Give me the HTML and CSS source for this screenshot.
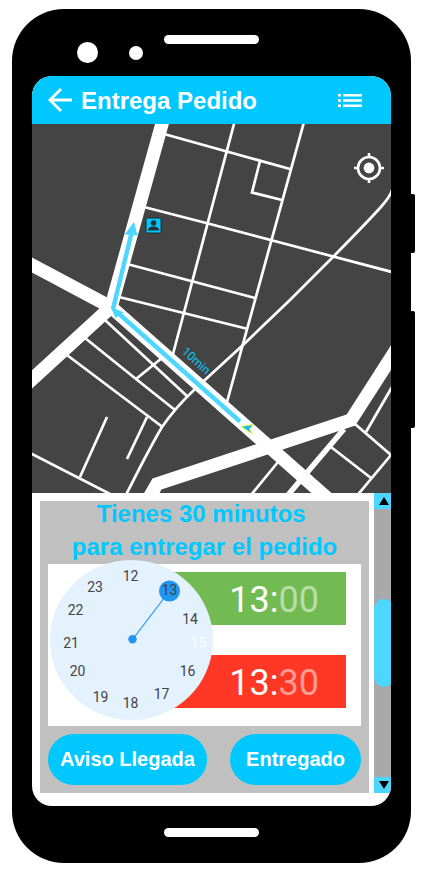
FILE: index.html
```html
<!DOCTYPE html>
<html lang="es">
<head>
<meta charset="utf-8">
<meta name="viewport" content="width=device-width, initial-scale=1">
<title>Entrega Pedido</title>
<link rel="stylesheet" href="styles.css">
</head>
<body>
<div class="phone">
  <span class="side-key side-key-power"></span>
  <span class="side-key side-key-volume"></span>
  <div class="bezel-top">
    <div class="sensors"><span class="camera"></span><span class="sensor"></span></div>
    <span class="speaker"></span>
  </div>
  <main class="screen">
    <header class="app-bar">
      <button class="icon-button" type="button" aria-label="Volver">
        <svg width="24" height="24" viewBox="0 0 24 24" fill="none" stroke="#fff" stroke-width="2.800"><path d="M24 12H3M13 1L2 12L13 23"/></svg>
      </button>
      <h1 class="app-title">Entrega Pedido</h1>
      <button class="icon-button menu-button" type="button" aria-label="Lista">
        <svg width="24" height="24" viewBox="0 0 24 24" fill="#fff"><path d="M0 6h3v2.500H0zM5 6h19v2.500H5zM0 11.200h3v2.500H0zM5 11.200h19v2.500H5zM0 16.500h3v2.500H0zM5 16.500h19v2.500H5z"/></svg>
      </button>
    </header>
    <section class="map" aria-label="Mapa">
      <svg class="map-drawing" viewBox="32 124 359 369">
        <g class="street">
          <path d="M164 134L290 169"/>
          <path d="M144 207L210 224L392 272"/>
          <path d="M129 264.500L255 298"/>
          <path d="M119 297L246 328.500"/>
          <path d="M234.500 122L173 354"/>
          <path d="M304 122L227 402"/>
          <path d="M260 161L252 192.500L282 200"/>
          <path d="M392 190C390 198 384 205 333 257L290 300L243 345L194 390Q175 408 162 427Q149 449 126 495"/>
          <path d="M105 320L188 397"/>
          <path d="M85 338L136 379L175 410"/>
          <path d="M67 355L162.500 427"/>
          <path d="M136 379L162 358"/>
          <path d="M107 417L80 477"/>
          <path d="M147 417L127 459"/>
          <path d="M31 453.500L111 494.500"/>
          <path d="M278 462L251 495"/>
          <path d="M355 424L391 455L358 494.500"/>
          <path d="M331 447L371 478"/>
          <path d="M366 432L392 387"/>
        </g>
        <path class="lane" d="M344 429L288 495"/>
        <g class="road">
          <path d="M165 113L111 307L15 395"/>
          <path d="M15 256L111 307L344 513"/>
          <path d="M142 510L157 484L351 420L403 339"/>
        </g>
        <path class="route" d="M132 231L113 309M117 312L240 421.500"/>
        <path class="route-head" d="M134 222L137.500 235.500L124.500 234.500ZM110.500 306.500L123.500 312.500L115.500 318Z"/>
        <path class="vehicle" d="M241 426.500L253.500 424.500L249.500 429L252.500 434Z"/>
        <g transform="translate(145.500 217.500)">
          <rect class="pin" x=".5" y=".5" width="15" height="15" rx="1.500"/>
          <circle cx="8" cy="5.500" r="2.800" fill="#263238"/>
          <path d="M2.500 13V11.800C3.500 9.500 6 9 8 9S12.500 9.500 13.500 11.800V13Z" fill="#263238"/>
        </g>
        <text class="route-time" transform="translate(181 352.500) rotate(42)">10min</text>
      </svg>
      <button class="icon-button locate-button" type="button" aria-label="Mi ubicación">
        <svg width="30" height="30" viewBox="0 0 30 30" fill="none" stroke="#fff" stroke-width="2.600"><circle cx="15" cy="15" r="11"/><circle cx="15" cy="15" r="5.400" fill="#fff" stroke="none"/><path d="M15 0V4M15 26V30M0 15H4M26 15H30"/></svg>
      </button>
    </section>
    <section class="panel">
      <div class="order">
        <h2 class="order-title">Tienes 30 minutos&nbsp;<br>para entregar el pedido</h2>
        <div class="times">
          <div class="time time-start"><span>13:</span><span class="minutes">00</span></div>
          <div class="time time-end"><span>13:</span><span class="minutes">30</span></div>
          <svg class="clock" width="164" height="160" viewBox="50 560 164 160" role="img" aria-label="Reloj">
            <ellipse cx="131.500" cy="640" rx="81.500" ry="80" fill="#e3f2fd"/>
            <path d="M132.500 639.500L169.500 591" stroke="#2196f3" stroke-width="1.200"/>
            <circle cx="132.500" cy="639.300" r="4.200" fill="#2196f3"/>
            <circle cx="169.500" cy="591" r="10.500" fill="#2196f3"/>
            <g class="hours">
              <text x="130.500" y="581">12</text>
              <text x="169.500" y="595">13</text>
              <text x="190" y="624">14</text>
              <text class="hour-active" x="198.500" y="648">15</text>
              <text x="187.500" y="676">16</text>
              <text x="161.500" y="699">17</text>
              <text x="130.500" y="708">18</text>
              <text x="100.500" y="702">19</text>
              <text x="77.500" y="676">20</text>
              <text x="71" y="648">21</text>
              <text x="75.500" y="615">22</text>
              <text x="95" y="592">23</text>
            </g>
          </svg>
        </div>
        <div class="actions">
          <button class="action" type="button">Aviso Llegada</button>
          <button class="action action-done" type="button">Entregado</button>
        </div>
      </div>
      <div class="scrollbar">
        <button class="scroll-step" type="button" aria-label="Subir"><svg width="10" height="8" viewBox="0 0 10 8"><path d="M5 0L10 8H0Z"/></svg></button>
        <div class="scroll-track"><span class="scroll-thumb"></span></div>
        <button class="scroll-step" type="button" aria-label="Bajar"><svg width="10" height="8" viewBox="0 0 10 8"><path d="M5 8L0 0H10Z"/></svg></button>
      </div>
    </section>
  </main>
  <div class="bezel-bottom"><span class="speaker"></span></div>
</div>
</body>
</html>
```

FILE: styles.css
```css
* { box-sizing: border-box; }

body {
  margin: 0;
  padding: 9px 15px 8px 12px;
  background: #fff;
  font-family: "Liberation Sans", Arial, sans-serif;
}

button {
  margin: 0;
  padding: 0;
  border: 0;
  font: inherit;
  color: inherit;
  cursor: pointer;
}

svg { display: block; }

h1, h2 { margin: 0; font-weight: bold; }

.phone {
  position: relative;
  max-width: 480px;
  margin: 0 auto;
  padding: 0 20px;
  background: #000;
  border-radius: 52px;
}

.side-key {
  position: absolute;
  right: -4px;
  width: 8px;
  background: #000;
  border-radius: 2px;
}

.side-key-power { top: 185px; height: 59px; }
.side-key-volume { top: 302px; height: 117px; }

.bezel-top {
  display: grid;
  grid-template-columns: 1fr auto 1fr;
  align-items: start;
  height: 67px;
  padding-top: 26px;
}

.sensors {
  display: flex;
  justify-content: flex-end;
  align-items: center;
  gap: 31px;
  padding: 7px 21px 0 0;
}

.camera, .sensor { border-radius: 50%; background: #fff; }
.camera { width: 21px; height: 21px; }
.sensor { width: 14px; height: 14px; }

.speaker {
  width: 95px;
  height: 9px;
  border-radius: 5px;
  background: #fff;
}

.bezel-bottom {
  display: flex;
  justify-content: center;
  height: 57px;
  padding-top: 22px;
}

.screen {
  overflow: hidden;
  border-radius: 20px;
  background: #fff;
}

.app-bar {
  display: flex;
  align-items: center;
  height: 48px;
  padding: 0 29px 0 16px;
  background: #00c8ff;
  color: #fff;
}

.app-title {
  margin-left: 9px;
  padding-top: 2px;
  font-size: 24px;
  line-height: 28px;
}

.icon-button { background: none; }
.menu-button { margin-left: auto; }

.map { position: relative; background: #444; }
.map-drawing { width: 100%; height: auto; }

.street, .lane, .road, .route { fill: none; }
.street, .lane, .road { stroke: #fff; }
.street { stroke-width: 2.7; }
.lane { stroke-width: 5.5; }
.road { stroke-width: 13.4; }
.route { stroke: #4dd6ff; stroke-width: 4.4; }
.route-head { fill: #4dd6ff; }
.vehicle { fill: #00c0f5; stroke: #f2f24a; stroke-width: 1; }
.pin { fill: #00c8ff; stroke: #1c2b30; }

.route-time {
  fill: #00c8ff;
  font-family: Roboto, sans-serif;
  font-size: 12px;
}

.locate-button { position: absolute; top: 29px; right: 7px; }

.panel {
  display: grid;
  grid-template-columns: 1fr 17px;
  column-gap: 5px;
  padding-bottom: 13px;
}

.order {
  margin: 8px 0 0 8px;
  padding: 0 8px 8px;
  background: #c0c0c0;
}

.order-title {
  padding-bottom: 1px;
  margin-top: -4px;
  color: #00c8ff;
  font-size: 24px;
  line-height: 33px;
  text-align: center;
}

.times {
  position: relative;
  display: grid;
  row-gap: 30px;
  padding: 8px 15px 18px 82px;
  background: #fff;
}

.time {
  display: flex;
  justify-content: flex-end;
  align-items: center;
  height: 53px;
  padding: 3px 27px 0 0;
  color: #fff;
  font-family: Roboto, sans-serif;
  font-size: 36px;
  line-height: 50px;
}

.time-start { background: #72bb53; }
.time-end { background: #ff3826; }
.time-start .minutes { color: #b8dda9; }
.time-end .minutes { color: #ff9c93; }

.clock { position: absolute; top: -4px; left: 2px; }

.hours {
  fill: #444;
  font-family: Roboto, sans-serif;
  font-size: 14px;
  text-anchor: middle;
}

.hours .hour-active { fill: #f7fbff; font-weight: 500; }

.actions {
  display: flex;
  justify-content: space-between;
  padding-top: 8px;
}

.action {
  height: 51px;
  padding: 0 12px;
  border-radius: 26px;
  background: #00c8ff;
  color: #fff;
  font-size: 20px;
  font-weight: bold;
}

.action-done { padding: 0 16px; }

.scrollbar {
  display: flex;
  flex-direction: column;
  overflow: hidden;
  background: #a9a9a9;
}

.scroll-step {
  display: grid;
  place-items: center;
  width: 20px;
  height: 16px;
  background: #4dd6ff;
}

.scroll-track { flex: 1; padding-top: 90px; }

.scroll-thumb {
  display: block;
  width: 20px;
  height: 88px;
  border-radius: 10px;
  background: #4dd6ff;
}
```
